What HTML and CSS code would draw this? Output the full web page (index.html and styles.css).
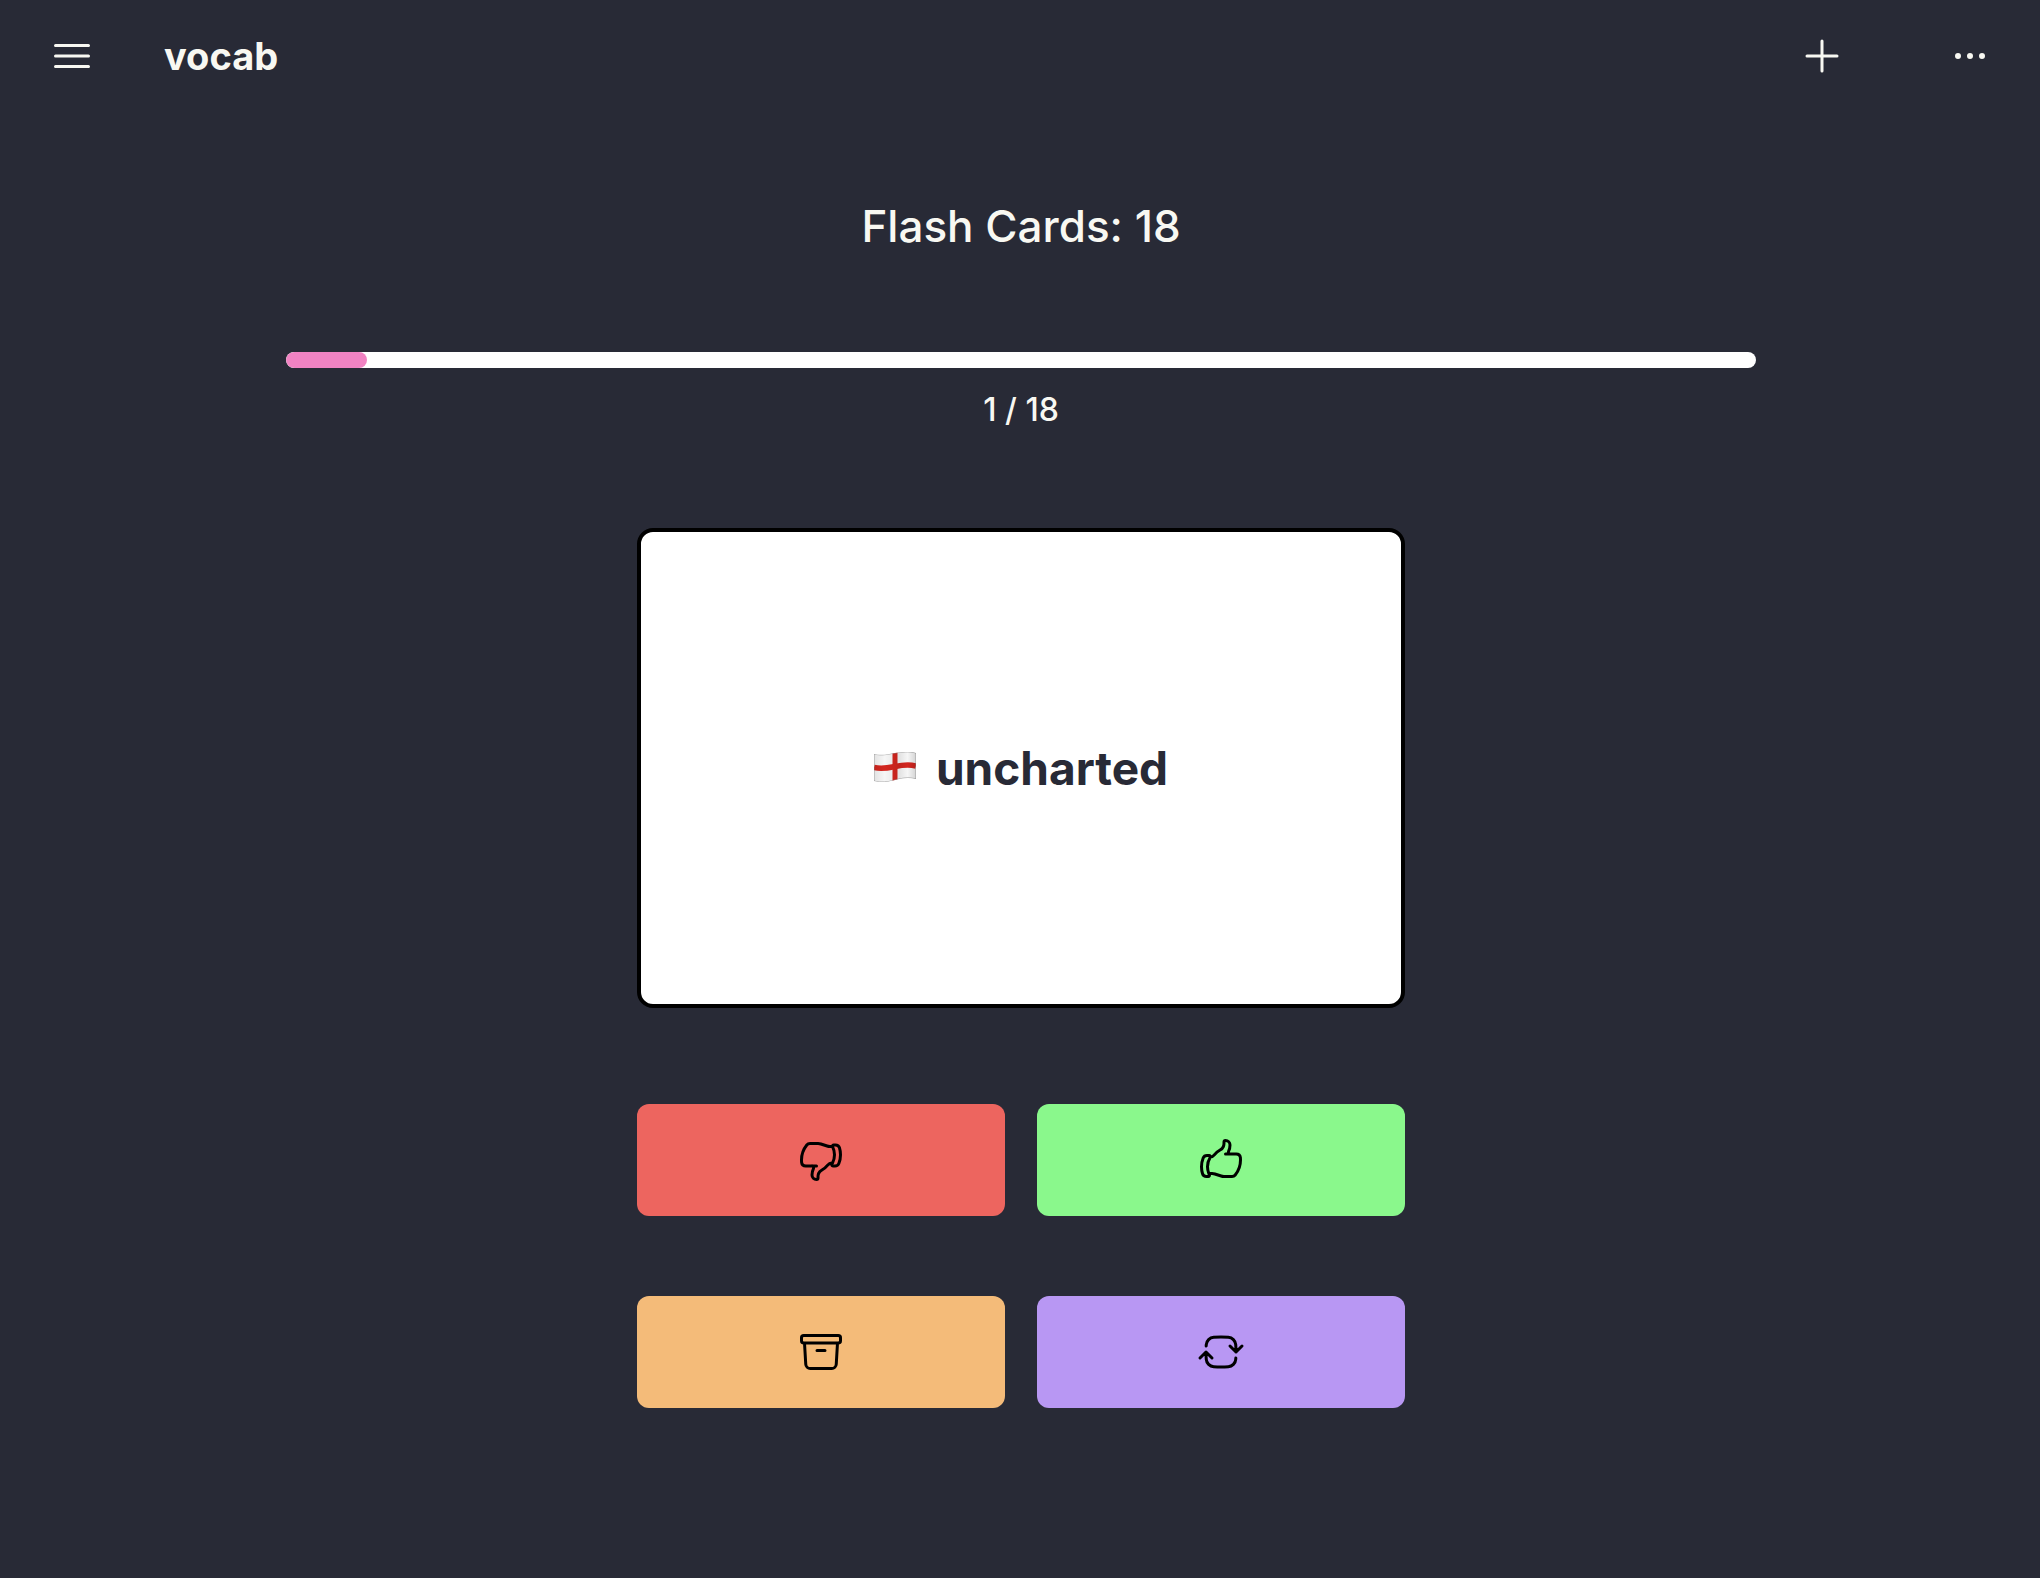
FILE: index.html
```html
<!DOCTYPE html>
<html lang="en">
<head>
<meta charset="utf-8">
<meta name="viewport" content="width=device-width, initial-scale=1">
<title>vocab</title>
<link rel="stylesheet" href="styles.css">
</head>
<body>
<header class="topbar">
  <button class="icon-button" type="button" aria-label="Menu">
    <svg class="icon" viewBox="0 0 24 24"><path d="M3.75 6.75h16.5M3.75 12h16.5m-16.5 5.25h16.5"/></svg>
  </button>
  <a class="brand" href="#">vocab</a>
  <div class="actions">
    <button class="icon-button" type="button" aria-label="Add">
      <svg class="icon" viewBox="0 0 24 24"><path d="M12 4.5v15m7.5-7.5h-15"/></svg>
    </button>
    <button class="icon-button" type="button" aria-label="More">
      <svg class="icon" viewBox="0 0 24 24"><path d="M6.75 12a.75.75 0 11-1.5 0 .75.75 0 011.5 0zM12.75 12a.75.75 0 11-1.5 0 .75.75 0 011.5 0zM18.75 12a.75.75 0 11-1.5 0 .75.75 0 011.5 0z"/></svg>
    </button>
  </div>
</header>
<main class="study">
  <h1 class="title">Flash Cards: 18</h1>
  <div class="progress" role="progressbar" aria-label="Progress" aria-valuemin="0" aria-valuemax="18" aria-valuenow="1">
    <div class="progress-fill" style="width: 5.5556%"></div>
  </div>
  <p class="count">1 / 18</p>
  <div class="deck">
    <button class="card" type="button">
      <svg class="flag" viewBox="0 0 42 32" role="img" aria-label="England">
        <defs>
          <clipPath id="cloth"><path d="M0 2C9 4 14 2 21 1S35-1 42 1V27C35 25 28 26 21 28S7 31 0 29Z"/></clipPath>
          <linearGradient id="fold"><stop offset="0" stop-color="#000" stop-opacity=".08"/><stop offset=".25" stop-color="#000" stop-opacity="0"/><stop offset=".6" stop-color="#000" stop-opacity=".08"/><stop offset=".8" stop-color="#000" stop-opacity="0"/><stop offset="1" stop-color="#000" stop-opacity=".14"/></linearGradient>
        </defs>
        <g clip-path="url(#cloth)">
          <path fill="#f6f6f6" d="M0 0h42v32H0z"/>
          <path fill="#d3261f" d="M18.500 0h5v32h-5z"/>
          <path fill="none" stroke="#d3261f" stroke-width="5.500" d="M0 15.500C8 17.500 14 16 21 14.500S35 12 42 14"/>
          <path fill="url(#fold)" d="M0 0h42v32H0z"/>
          <path fill="none" stroke="#888" stroke-opacity=".7" d="M0 2C9 4 14 2 21 1S35-1 42 1V27C35 25 28 26 21 28S7 31 0 29Z"/>
        </g>
      </svg>
      <span>uncharted</span>
    </button>
    <div class="answers">
      <button class="answer red" type="button" aria-label="Don't know">
        <svg class="icon" viewBox="0 0 24 24"><path d="M7.5 15h2.25m8.024-9.75c.011.05.028.1.052.148.591 1.2.924 2.55.924 3.977a8.96 8.96 0 01-.999 4.125m.023-8.25c-.076-.365.183-.75.575-.75h.908c.889 0 1.713.518 1.972 1.368.339 1.11.521 2.287.521 3.507 0 1.553-.295 3.036-.831 4.398C20.613 14.547 19.833 15 19 15h-1.053c-.472 0-.745-.556-.5-.96a8.95 8.95 0 00.303-.54m.023-8.25H16.48a4.5 4.5 0 01-1.423-.23l-3.114-1.04a4.5 4.5 0 00-1.423-.23H6.504c-.618 0-1.217.247-1.605.729A11.95 11.95 0 002.25 12c0 .434.023.863.068 1.285C2.427 14.306 3.346 15 4.372 15h3.126c.618 0 .991.724.725 1.282A7.471 7.471 0 007.5 19.5a2.25 2.25 0 002.25 2.25.75.75 0 00.75-.75v-.633c0-.573.11-1.14.322-1.672.304-.76.93-1.33 1.653-1.715a9.04 9.04 0 002.86-2.4c.498-.634 1.226-1.08 2.032-1.08h.384"/></svg>
      </button>
      <button class="answer green" type="button" aria-label="Know">
        <svg class="icon" viewBox="0 0 24 24"><path d="M6.633 10.5c.806 0 1.533-.446 2.031-1.08a9.041 9.041 0 012.861-2.4c.723-.384 1.35-.956 1.653-1.715a4.498 4.498 0 00.322-1.672V3a.75.75 0 01.75-.75A2.25 2.25 0 0116.5 4.5c0 1.152-.26 2.243-.723 3.218-.266.558.107 1.282.725 1.282h3.126c1.026 0 1.945.694 2.054 1.715.045.422.068.85.068 1.285a11.95 11.95 0 01-2.649 7.521c-.388.482-.987.729-1.605.729H13.48c-.483 0-.964-.078-1.423-.23l-3.114-1.04a4.501 4.501 0 00-1.423-.23H5.904M14.25 9h2.25M5.904 18.75c.083.205.173.405.27.602.197.4-.078.898-.523.898h-.908c-.889 0-1.713-.518-1.972-1.368a12 12 0 01-.521-3.507c0-1.553.295-3.036.831-4.398C3.387 10.203 4.167 9.75 5 9.75h1.053c.472 0 .745.556.5.96a8.958 8.958 0 00-1.302 4.665c0 1.194.232 2.333.654 3.375z"/></svg>
      </button>
      <button class="answer orange" type="button" aria-label="Archive">
        <svg class="icon" viewBox="0 0 24 24"><path d="M20.25 7.5l-.625 10.632a2.25 2.25 0 01-2.247 2.118H6.622a2.25 2.25 0 01-2.247-2.118L3.75 7.5M10 11.25h4M3.375 7.5h17.25c.621 0 1.125-.504 1.125-1.125v-1.5c0-.621-.504-1.125-1.125-1.125H3.375c-.621 0-1.125.504-1.125 1.125v1.5c0 .621.504 1.125 1.125 1.125z"/></svg>
      </button>
      <button class="answer purple" type="button" aria-label="Flip">
        <svg class="icon" viewBox="0 0 24 24"><path d="M19.5 12c0-1.232-.046-2.453-.138-3.662a4.006 4.006 0 00-3.7-3.7 48.678 48.678 0 00-7.324 0 4.006 4.006 0 00-3.7 3.7c-.017.22-.032.441-.046.662M19.5 12l3-3m-3 3l-3-3m-12 3c0 1.232.046 2.453.138 3.662a4.006 4.006 0 003.7 3.7 48.656 48.656 0 007.324 0 4.006 4.006 0 003.7-3.7c.017-.22.032-.441.046-.662M4.5 12l3 3m-3-3l-3 3"/></svg>
      </button>
    </div>
  </div>
</main>
</body>
</html>
```
FILE: styles.css
```css
*,
*::before,
*::after {
  box-sizing: border-box;
}

body {
  margin: 0;
  min-height: 100vh;
  background: #282a36;
  color: #f8f8f2;
  font-family: Inter, "Liberation Sans", sans-serif;
}

button {
  margin: 0;
  padding: 0;
  border: 0;
  background: none;
  color: inherit;
  font: inherit;
  cursor: pointer;
}

.icon {
  display: block;
  width: 48px;
  height: 48px;
  fill: none;
  stroke: currentColor;
  stroke-width: 1.5;
  stroke-linecap: round;
  stroke-linejoin: round;
}

.topbar {
  display: flex;
  align-items: center;
  padding: 32px 46px 32px 48px;
}

.brand {
  margin-left: 68px;
  color: inherit;
  font-size: 38px;
  font-weight: 700;
  line-height: 48px;
  text-decoration: none;
}

.actions {
  display: flex;
  gap: 100px;
  margin-left: auto;
}

.study {
  padding: 82px 13.9% 96px 14%;
}

.title {
  margin: 0;
  font-size: 44px;
  font-weight: 500;
  line-height: 64px;
  text-align: center;
}

.progress {
  height: 16px;
  margin-top: 94px;
  overflow: hidden;
  border-radius: 8px;
  background: #fff;
}

.progress-fill {
  height: 100%;
  border-radius: 8px;
  background: #f183c3;
}

.count {
  margin: 18px 0 0;
  font-size: 32px;
  font-weight: 500;
  line-height: 48px;
  text-align: center;
}

.deck {
  max-width: 768px;
  margin: 94px auto 0;
}

.card {
  display: flex;
  align-items: center;
  justify-content: center;
  gap: 20px;
  width: 100%;
  min-height: 480px;
  border: 4px solid #000;
  border-radius: 16px;
  background: #fff;
  color: #282a36;
  font-size: 46px;
  font-weight: 700;
  line-height: 64px;
}

.flag {
  width: 42px;
  height: 32px;
}

.answers {
  display: grid;
  grid-template-columns: 1fr 1fr;
  gap: 80px 32px;
  margin-top: 96px;
}

.answer {
  display: flex;
  align-items: center;
  justify-content: center;
  min-height: 112px;
  border-radius: 12px;
  color: #000;
}

.red {
  background: #ed655f;
}

.green {
  background: #8af88c;
}

.orange {
  background: #f4bb79;
}

.purple {
  background: #b897f3;
}
```
